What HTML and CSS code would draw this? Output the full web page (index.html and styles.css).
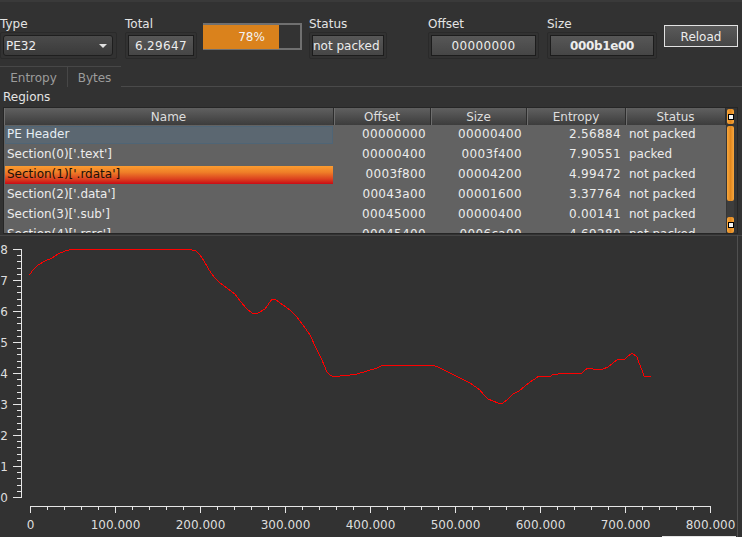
FILE: index.html
```html
<!DOCTYPE html>
<html>
<head>
<meta charset="utf-8">
<title>Entropy</title>
<link rel="stylesheet" href="styles.css">
</head>
<body>
<div class="topline"></div>
<div class="toolbar">
  <div class="field f-type">
    <div class="lbl">Type</div>
    <div class="frame"><div class="combo"><span>PE32</span><i class="arrow"></i></div></div>
  </div>
  <div class="field f-total">
    <div class="lbl">Total</div>
    <div class="frame"><div class="box center num">6.29647</div></div>
  </div>
  <div class="progress"><div class="fill" style="width:78%"></div><div class="ptext">78%</div></div>
  <div class="field f-status">
    <div class="lbl">Status</div>
    <div class="frame"><div class="box">not packed</div></div>
  </div>
  <div class="field f-offset">
    <div class="lbl">Offset</div>
    <div class="frame"><div class="box center num">00000000</div></div>
  </div>
  <div class="field f-size">
    <div class="lbl">Size</div>
    <div class="frame"><div class="box center bold">000b1e00</div></div>
  </div>
  <button class="reload">Reload</button>
</div>
<div class="tabs">
  <div class="tab t1">Entropy</div>
  <div class="tab t2">Bytes</div>
  <div class="tab-rest"></div>
</div>
<div class="regions">Regions</div>
<div class="table-wrap">
  <div class="grid">
    <div class="th">Name</div><div class="th">Offset</div><div class="th">Size</div><div class="th">Entropy</div><div class="th">Status</div>

    <div class="name sel-blue"><div>PE Header</div></div><div class="td num">00000000</div><div class="td num">00000400</div><div class="td num">2.56884</div><div class="td st">not packed</div>
    <div class="name"><div>Section(0)['.text']</div></div><div class="td num">00000400</div><div class="td num">0003f400</div><div class="td num">7.90551</div><div class="td st">packed</div>
    <div class="name sel-orange"><div>Section(1)['.rdata']</div></div><div class="td num">0003f800</div><div class="td num">00004200</div><div class="td num">4.99472</div><div class="td st">not packed</div>
    <div class="name"><div>Section(2)['.data']</div></div><div class="td num">00043a00</div><div class="td num">00001600</div><div class="td num">3.37764</div><div class="td st">not packed</div>
    <div class="name"><div>Section(3)['.sub']</div></div><div class="td num">00045000</div><div class="td num">00000400</div><div class="td num">0.00141</div><div class="td st">not packed</div>
    <div class="name"><div>Section(4)['.rsrc']</div></div><div class="td num">00045400</div><div class="td num">0006ca00</div><div class="td num">4.69280</div><div class="td st">not packed</div>
  </div>
  <div class="vscroll">
    <div class="sb-btn"></div>
    <div class="sb-handle"></div>
    <div class="sb-track"></div>
    <div class="sb-btn bottom"></div>
  </div>
</div>
<div class="chart">
  <svg class="plot" width="742" height="302" viewBox="0 235 742 302" xmlns="http://www.w3.org/2000/svg">
    <line class="sep" x1="0" y1="235.5" x2="742" y2="235.5"/>
    <line class="edge" x1="737.5" y1="235" x2="737.5" y2="537"/>
    <line class="grip" x1="662" y1="536.5" x2="736" y2="536.5"/>
    <g class="axis">
      <line x1="21.5" y1="249" x2="21.5" y2="498"/>
      <line x1="19" y1="249" x2="19" y2="498" stroke-width="4" stroke-dasharray="1 5.2"/>
      <line x1="17" y1="249" x2="17" y2="498" stroke-width="8" stroke-dasharray="1 30"/>
      <line x1="30" y1="506.5" x2="711" y2="506.5"/>
      <line x1="30" y1="508" x2="711" y2="508" stroke-width="4" stroke-dasharray="1 16"/>
      <line x1="30" y1="509.5" x2="711" y2="509.5" stroke-width="7" stroke-dasharray="1 84"/>
    </g>
    <g class="ylab">
      <text x="8" y="254">8</text>
      <text x="8" y="285">7</text>
      <text x="8" y="316">6</text>
      <text x="8" y="347">5</text>
      <text x="8" y="378">4</text>
      <text x="8" y="409">3</text>
      <text x="8" y="440">2</text>
      <text x="8" y="471">1</text>
      <text x="8" y="502">0</text>
    </g>
    <g class="xlab">
      <text x="30.5" y="529">0</text>
      <text x="115.5" y="529">100.000</text>
      <text x="200.5" y="529">200.000</text>
      <text x="285.5" y="529">300.000</text>
      <text x="370.5" y="529">400.000</text>
      <text x="455.5" y="529">500.000</text>
      <text x="540.5" y="529">600.000</text>
      <text x="625.5" y="529">700.000</text>
      <text x="710.5" y="529">800.000</text>
    </g>
    <polyline class="curve" points="29.3,275 33,270 38,265 45,261 52,258 58,254 65,251 71,249.5 190.5,249.5 196,251 200,255 204,261 208,268 211,273 215,278 220,283 227,288 235,294 240,301 247,309 252,313 258,313 265,309 272,299 276,300 283,305 290,310 297,317 303,325 310,335 317,350 322,360 327,372 330,375 334,377 340,376 350,375 357,374 367,371 377,368 383,365 433,365 440,368 450,373 460,378 470,383 480,390 483,394 488,399 493,401 498,403 503,403 507,400 513,394 519,391 525,386 530,382 535,379 539,376 551,376 552,375 558,374 560,373 582,373 585,370 588,368 593,369 603,369 608,367 613,363 618,359 625,359 627,357 632,353 637,357 639,363 642,370 644,376 651,376"/>
  </svg>
</div>
</body>
</html>
```
FILE: styles.css
```css
* { box-sizing: border-box; }
html, body { margin: 0; padding: 0; }
body {
  width: 742px;
  height: 537px;
  overflow: hidden;
  background: #323232;
  color: #e2e2e2;
  font-family: "DejaVu Sans", sans-serif;
  font-size: 12px;
}
.topline { height: 2px; background: #3a3a3a; }

/* toolbar */
.toolbar { display: flex; align-items: flex-start; height: 64px; padding-top: 14px; }
.field { display: flex; flex-direction: column; }
.lbl { height: 14px; padding-top: 1px; line-height: 14px; white-space: nowrap; color: #e4e4e4; }
.frame {
  margin-top: 2px;
  height: 27px;
  border: 1px solid #2a2a2a;
  border-radius: 2px;
  padding: 2px;
}
.box {
  height: 21px;
  border: 1px solid #1c1c1c;
  background: linear-gradient(#575757, #464646);
  line-height: 20px;
  white-space: nowrap;
  color: #ececec;
}
.center { text-align: center; }
.num { letter-spacing: 0.35px; }
.bold { font-weight: bold; letter-spacing: -0.35px; }

.f-type { width: 117px; }
.f-type .frame { padding: 2px 3px 2px 2px; }
.combo {
  display: flex;
  align-items: center;
  height: 21px;
  border: 1px solid #1e1e1e;
  border-radius: 3px;
  background: linear-gradient(#4b4b4b, #3a3a3a);
  padding-left: 2px;
  color: #ececec;
}
.arrow {
  margin-left: auto;
  margin-right: 5px;
  width: 0;
  height: 0;
  border-left: 4px solid transparent;
  border-right: 4px solid transparent;
  border-top: 4px solid #e0e0e0;
}
.f-total { width: 72px; margin-left: 8px; }
.f-status { width: 78px; margin-left: 7px; }
.f-offset { width: 111px; margin-left: 41px; }
.f-size { width: 110px; margin-left: 8px; }

.progress {
  display: grid;
  width: 99px;
  height: 27px;
  margin: 7px 0 0 6px;
  border: 2px solid #707070;
  border-left: none;
  background: #333333;
}
.progress > * { grid-area: 1 / 1; }
.fill { height: 100%; background: #da821c; }
.ptext { text-align: center; line-height: 24px; color: #f2f2f2; }

.reload {
  width: 74px;
  height: 22px;
  margin: 9px 0 0 7px;
  padding: 1px 0 0;
  border: 1px solid #e2e2e2;
  background: linear-gradient(#5a5a5a, #464646);
  color: #ececec;
  font-family: "DejaVu Sans", sans-serif;
  font-size: 12px;
}

/* tabs */
.tabs { display: flex; height: 21px; }
.tab {
  padding-top: 3px;
  line-height: 17px;
  text-align: center;
  border-top: 1px solid #474747;
  color: #9c9c9c;
}
.t1 { width: 67px; }
.t2 { width: 54px; border-left: 1px solid #474747; }
.tab-rest { flex: 1; border-bottom: 1px solid #4a4a4a; }
.regions { height: 17px; padding-top: 2px; line-height: 17px; padding-left: 3px; color: #e4e4e4; }

/* table */
.table-wrap {
  display: flex;
  width: 735px;
  height: 127px;
  margin: 3px 0 0 3px;
  border: 1px solid #262626;
  background: #353535;
}
.grid {
  display: grid;
  grid-template-columns: 330px 97px 96px 99px 100px;
  grid-template-rows: 17px;
  grid-auto-rows: 20px;
  align-content: start;
  width: 722px;
  height: 125px;
  overflow: hidden;
  background: #626262;
  color: #ececec;
}
.th {
  padding-top: 1px;
  line-height: 16px;
  text-align: center;
  color: #dedede;
  background: linear-gradient(#606060, #3c3c3c);
  border-right: 1px solid #2c2c2c;
  box-shadow: inset 1px 0 #6e6e6e;
}
.td { padding-top: 2px; line-height: 14px; white-space: nowrap; overflow: hidden; }
.td.num { text-align: right; padding-right: 5px; }
.td.st { padding-left: 3px; }
.name { padding: 1px; white-space: nowrap; overflow: hidden; }
.name > div {
  height: 18px;
  border: 1px solid transparent;
  padding-left: 1px;
  line-height: 14px;
  background-origin: border-box;
}
.sel-blue > div { background: #5b6771; border-color: #4f6576; color: #e6eef4; }
.sel-orange > div {
  border: none;
  padding: 1px 0 0 2px;
  background: linear-gradient(#fb9c30, #ef7e28 35%, #dc421f 72%, #c80c16);
  color: #1c1008;
}

.vscroll {
  display: flex;
  flex-direction: column;
  width: 11px;
  padding: 1px 0 0 1px;
  background: #353535;
}
.sb-btn, .sb-handle {
  width: 7px;
  border-radius: 2px;
  background: linear-gradient(90deg, #f7a73e, #e2881e 50%, #f7a73e);
}
.sb-btn { height: 15px; display: flex; align-items: center; justify-content: center; }
.sb-btn::after {
  content: "";
  width: 4px;
  height: 4px;
  background: #f4f4f4;
  border: 1px solid #000;
}
.sb-btn.bottom { height: 16px; }
.sb-handle { margin-top: 2px; height: 75px; }
.sb-track { flex: 1; width: 7px; background: #3d3d3d; }

/* chart */
.chart { margin-top: 1px; height: 302px; }
.plot { display: block; }
.sep { stroke: #464646; }
.edge { stroke: #505050; }
.grip { stroke: #e4e4e4; }
.axis line { stroke: #e6e6e6; shape-rendering: crispEdges; }
.ylab, .xlab { font-family: "DejaVu Sans", sans-serif; font-size: 12px; fill: #dedede; }
.ylab { text-anchor: end; }
.xlab { text-anchor: middle; }
.curve { fill: none; stroke: #ff0000; stroke-width: 1; shape-rendering: crispEdges; }
```
